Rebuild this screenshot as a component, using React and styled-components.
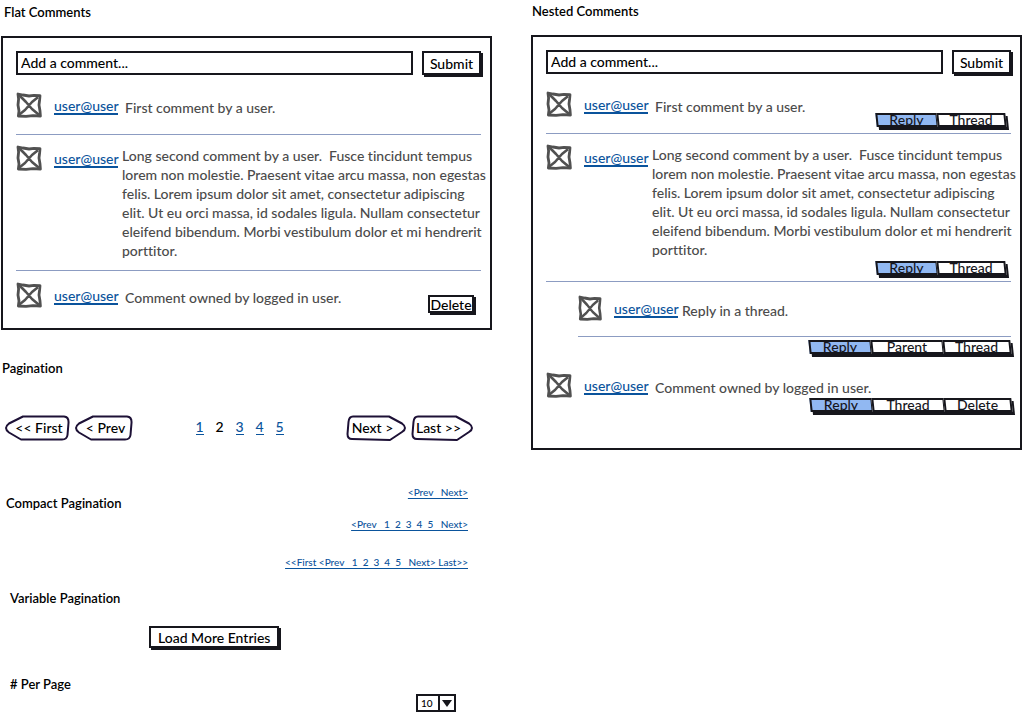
import React from "react";
import styled, { createGlobalStyle } from "styled-components";

const ink = "#16161c";
const linkBlue = "#0a539c";

const GlobalStyle = createGlobalStyle`
  * { box-sizing: border-box; }
  body {
    margin: 0;
    background: #fff;
    color: #000;
    font: 500 14px/19px Lato, "Open Sans", sans-serif;
    font-variant-ligatures: none;
  }
  button, input, select { font: inherit; color: inherit; margin: 0; }
`;

const Page = styled.main`
  display: grid;
  grid-template-columns: repeat(2, minmax(0, 1fr));
  column-gap: 39px;
  align-items: start;
  padding: 0 1px;
`;

const Column = styled.div`
  padding-top: ${(p) => p.$top}px;
`;

const Heading = styled.h2`
  margin: 0 0 ${(p) => p.$after || 0}px;
  padding-left: ${(p) => p.$indent}px;
  font-size: 13px;
  font-weight: 600;
  line-height: 20px;
`;

const Panel = styled.section`
  border: 2px solid ${ink};
  padding: 13px 9px ${(p) => p.$bottom}px 13px;
`;

const CommentForm = styled.form`
  display: flex;
  gap: 9px;
`;

const CommentInput = styled.input`
  flex: 1;
  min-width: 0;
  height: 24px;
  padding: 0 3px 2px;
  border: 2px solid ${ink};
  border-radius: 0;
  background: #fff;
  outline: none;
  &::placeholder { color: #000; opacity: 1; }
`;

const Button = styled.button`
  display: inline-flex;
  align-items: center;
  justify-content: center;
  height: ${(p) => p.$height || 24}px;
  padding: 0 ${(p) => (p.$pad === undefined ? 7 : p.$pad)}px;
  border: 2px solid ${ink};
  background: #fff;
  box-shadow: 3px 3px 0 -1px ${ink}, 2px 2px 0 ${ink};
  white-space: nowrap;
`;

const SubmitButton = styled(Button)`
  width: 59px;
`;

const DeleteButton = styled(Button)`
  width: 46px;
  margin: 13px 7px 0 auto;
`;

const Comment = styled.article`
  display: flex;
  align-items: flex-start;
  padding-top: ${(p) => p.$above}px;
  padding-bottom: ${(p) => p.$below || 0}px;
`;

const Thread = styled.div`
  padding-left: 32px;
`;

const AvatarIcon = styled.svg`
  flex: none;
  width: ${(p) => p.$size}px;
  height: 26px;
  margin-right: 12px;
`;

const UserLink = styled.a`
  flex: none;
  width: 64px;
  margin-top: 6px;
  color: ${linkBlue};
  line-height: 15px;
  border-bottom: 2px solid ${linkBlue};
  text-decoration: none;
  white-space: nowrap;
`;

const CommentText = styled.p`
  margin: ${(p) => (p.$long ? 1 : 6)}px 0 0;
  padding-left: ${(p) => (p.$long || p.$tight ? 4 : 7)}px;
  color: #4b4b4b;
  white-space: pre;
`;

const Divider = styled.hr`
  height: 1px;
  margin: 0;
  border: 0;
  background: #8c9cc2;
`;

const ButtonBar = styled.div`
  display: flex;
  justify-content: flex-end;
  margin: ${(p) => p.$above}px ${(p) => p.$inset}px ${(p) => p.$below}px 0;
`;

const Segment = styled.button`
  position: relative;
  z-index: 0;
  flex: none;
  width: ${(p) => p.$width}px;
  height: 14px;
  padding: 0;
  border: 0;
  background: none;
  color: ${ink};
  line-height: 14px;
  &::before {
    content: "";
    position: absolute;
    z-index: -1;
    inset: 0 -1px 0 0;
    border: 2px solid ${ink};
    background: ${(p) => (p.$active ? "#91b8f2" : "#fff")};
    box-shadow: 2px 3px 0 ${ink};
    transform: skewX(6deg);
  }
`;

const PageNav = styled.nav`
  display: flex;
  align-items: center;
  justify-content: space-between;
  height: 26px;
  padding: 0 18px 0 3px;
`;

const ArrowGroup = styled.div`
  display: flex;
  gap: 4px;
`;

const ArrowButton = styled.button`
  position: relative;
  width: ${(p) => p.$width}px;
  height: 26px;
  padding: ${(p) => (p.$back ? "0 0 2px 4px" : "0 8px 2px 0")};
  border: 0;
  background: none;
  white-space: nowrap;
  svg { position: absolute; inset: 0; width: 100%; height: 100%; }
`;

const PageNumbers = styled.div`
  display: flex;
  gap: 12px;
  padding-bottom: 2px;
  a, span { width: 8px; text-align: center; line-height: 15px; }
  a {
    color: ${linkBlue};
    border-bottom: 1px solid ${linkBlue};
    text-decoration: none;
  }
`;

const PaginationSection = styled.section`
  padding-top: 28px;
`;

const CompactSection = styled.section`
  display: flex;
  justify-content: space-between;
  align-items: flex-start;
  padding: 43px 24px 18px 0;
`;

const CompactHeading = styled(Heading)`
  padding-top: 9px;
`;

const CompactList = styled.div`
  display: flex;
  flex-direction: column;
  align-items: flex-end;
`;

const CompactNav = styled.nav`
  height: 16px;
  margin-bottom: ${(p) => p.$after || 0}px;
  font-size: 10px;
  line-height: 16px;
  white-space: pre;
  a {
    color: ${linkBlue};
    text-decoration: underline;
    text-underline-offset: 2px;
    text-decoration-skip-ink: none;
  }
`;

const LoadRow = styled.div`
  display: flex;
  padding: 0 0 26px 148px;
`;

const PerPageRow = styled.div`
  display: flex;
  justify-content: flex-end;
  padding-right: 36px;
`;

const SelectBox = styled.div`
  position: relative;
  width: 40px;
  height: 18px;
  svg { position: absolute; right: 0; top: 0; pointer-events: none; }
`;

const Select = styled.select`
  display: block;
  appearance: none;
  width: 100%;
  height: 100%;
  padding: 0 0 0 3px;
  border: 2px solid ${ink};
  border-radius: 0;
  background: #fff;
  font-size: 10px;
  line-height: 14px;
`;

function Avatar({ size = 26 }) {
  return (
    <AvatarIcon $size={size} viewBox="0 0 26 26" preserveAspectRatio="none" aria-hidden="true">
      <g fill="none" stroke="#515151" strokeLinecap="round" strokeLinejoin="round">
        <path strokeWidth="2.8" d="M2 2 L7 3 L13 4 L18 3.4 L24 3.6 L23.6 8 L23 13 L24 19 L24.4 24 L17 23.6 L10 24.4 L2.4 24 L3 19 L2 13 L2.6 7 Z" />
        <path strokeWidth="2.6" d="M4 4 L10 10 L16 17 L22 22 M21 6 L16 10 L9 18 L4 22" />
      </g>
    </AvatarIcon>
  );
}

function Entry({ above, below, long, tight, size, children, action }) {
  return (
    <Comment $above={above} $below={below}>
      <Avatar size={size} />
      <UserLink href="#user">user@user</UserLink>
      <CommentText $long={long} $tight={tight}>{children}</CommentText>
      {action}
    </Comment>
  );
}

function AddComment() {
  return (
    <CommentForm onSubmit={(e) => e.preventDefault()}>
      <CommentInput aria-label="Add a comment" placeholder="Add a comment..." />
      <SubmitButton type="submit">Submit</SubmitButton>
    </CommentForm>
  );
}

function Actions({ items, above = 0, below = 0, inset = 0 }) {
  const widths = items.length === 2 ? [61, 68] : [62, 72, 67];
  return (
    <ButtonBar $above={above} $below={below} $inset={inset}>
      {items.map((item, i) => (
        <Segment key={item} type="button" $width={widths[i]} $active={i === 0}>
          {item}
        </Segment>
      ))}
    </ButtonBar>
  );
}

function Arrow({ width, back, children }) {
  const w = width;
  const d = back
    ? `M19 1.5 L${w - 6} 1.5 Q${w - 1} 2 ${w - 1.5} 8 L${w - 2.5} 20 Q${w - 3} 24.5 ${w - 8} 24.5 L17 24.5 L5 17.5 Q-1 13 5 8.5 Z`
    : `M7 1.5 L${w - 18} 1.5 L${w - 5} 8.5 Q${w + 1} 13 ${w - 5} 17 L${w - 17} 25 L6 24 Q1.5 24 1.5 19 L2.5 7 Q3 1.5 7 1.5 Z`;
  return (
    <ArrowButton type="button" $width={width} $back={back}>
      <svg viewBox={`0 0 ${w} 26`} aria-hidden="true">
        <path d={d} fill="none" stroke="#1d1136" strokeWidth="2" strokeLinejoin="round" />
      </svg>
      {children}
    </ArrowButton>
  );
}

const longText = [
  "Long second comment by a user.  Fusce tincidunt tempus",
  "lorem non molestie. Praesent vitae arcu massa, non egestas",
  "felis. Lorem ipsum dolor sit amet, consectetur adipiscing",
  "elit. Ut eu orci massa, id sodales ligula. Nullam consectetur",
  "eleifend bibendum. Morbi vestibulum dolor et mi hendrerit",
  "porttitor.",
].join("\n");

export default function App() {
  return (
    <>
      <GlobalStyle />
      <Page>
        <Column $top={2}>
          <Heading $indent={3} $after={14}>Flat Comments</Heading>
          <Panel $bottom={15}>
            <AddComment />
            <Entry above={17} below={16}>First comment by a user.</Entry>
            <Divider />
            <Entry above={10} below={10} long>{longText}</Entry>
            <Divider />
            <Entry
              above={11}
              action={<DeleteButton type="button" $height={18} $pad={0}>Delete</DeleteButton>}
            >
              Comment owned by logged in user.
            </Entry>
          </Panel>

          <PaginationSection>
            <Heading $indent={1} $after={37}>Pagination</Heading>
            <PageNav aria-label="Pagination">
              <ArrowGroup>
                <Arrow width={66} back>{"<< First"}</Arrow>
                <Arrow width={59} back>{"< Prev"}</Arrow>
              </ArrowGroup>
              <PageNumbers>
                <a href="#1">1</a>
                <span aria-current="page">2</span>
                <a href="#3">3</a>
                <a href="#4">4</a>
                <a href="#5">5</a>
              </PageNumbers>
              <ArrowGroup>
                <Arrow width={61}>{"Next >"}</Arrow>
                <Arrow width={63}>{"Last >>"}</Arrow>
              </ArrowGroup>
            </PageNav>
          </PaginationSection>

          <CompactSection>
            <CompactHeading $indent={5}>Compact Pagination</CompactHeading>
            <CompactList>
              <CompactNav $after={16}><a href="#p">{"<Prev   Next>"}</a></CompactNav>
              <CompactNav $after={22}><a href="#p">{"<Prev   1  2  3  4  5   Next>"}</a></CompactNav>
              <CompactNav><a href="#p">{"<<First <Prev   1  2  3  4  5   Next> Last>>"}</a></CompactNav>
            </CompactList>
          </CompactSection>

          <section>
            <Heading $indent={9} $after={18}>Variable Pagination</Heading>
            <LoadRow>
              <Button type="button" $height={22}>Load More Entries</Button>
            </LoadRow>
          </section>

          <section>
            <Heading $indent={9}>
              <label htmlFor="per-page"># Per Page</label>
            </Heading>
            <PerPageRow>
              <SelectBox>
                <Select id="per-page" defaultValue="10">
                  <option value="10">10</option>
                </Select>
                <svg width="19" height="18" viewBox="0 0 19 18" aria-hidden="true">
                  <path d="M2 1 V17" stroke={ink} strokeWidth="2" />
                  <path d="M5 6 L15 6 L10 13 Z" fill={ink} />
                </svg>
              </SelectBox>
            </PerPageRow>
          </section>
        </Column>

        <Column $top={1}>
          <Heading $indent={1} $after={14}>Nested Comments</Heading>
          <Panel $bottom={36}>
            <AddComment />
            <Entry above={17}>First comment by a user.</Entry>
            <Actions items={["Reply", "Thread"]} above={-4} below={6} inset={6} />
            <Divider />
            <Entry above={10} long>{longText}</Entry>
            <Actions items={["Reply", "Thread"]} above={2} below={6} inset={6} />
            <Divider />
            <Thread>
              <Entry above={13} below={15} size={24} tight>Reply in a thread.</Entry>
              <Divider />
            </Thread>
            <Actions items={["Reply", "Parent", "Thread"]} above={3} below={18} inset={1} />
            <Entry above={0}>Comment owned by logged in user.</Entry>
            <Actions items={["Reply", "Thread", "Delete"]} above={0} />
          </Panel>
        </Column>
      </Page>
    </>
  );
}
